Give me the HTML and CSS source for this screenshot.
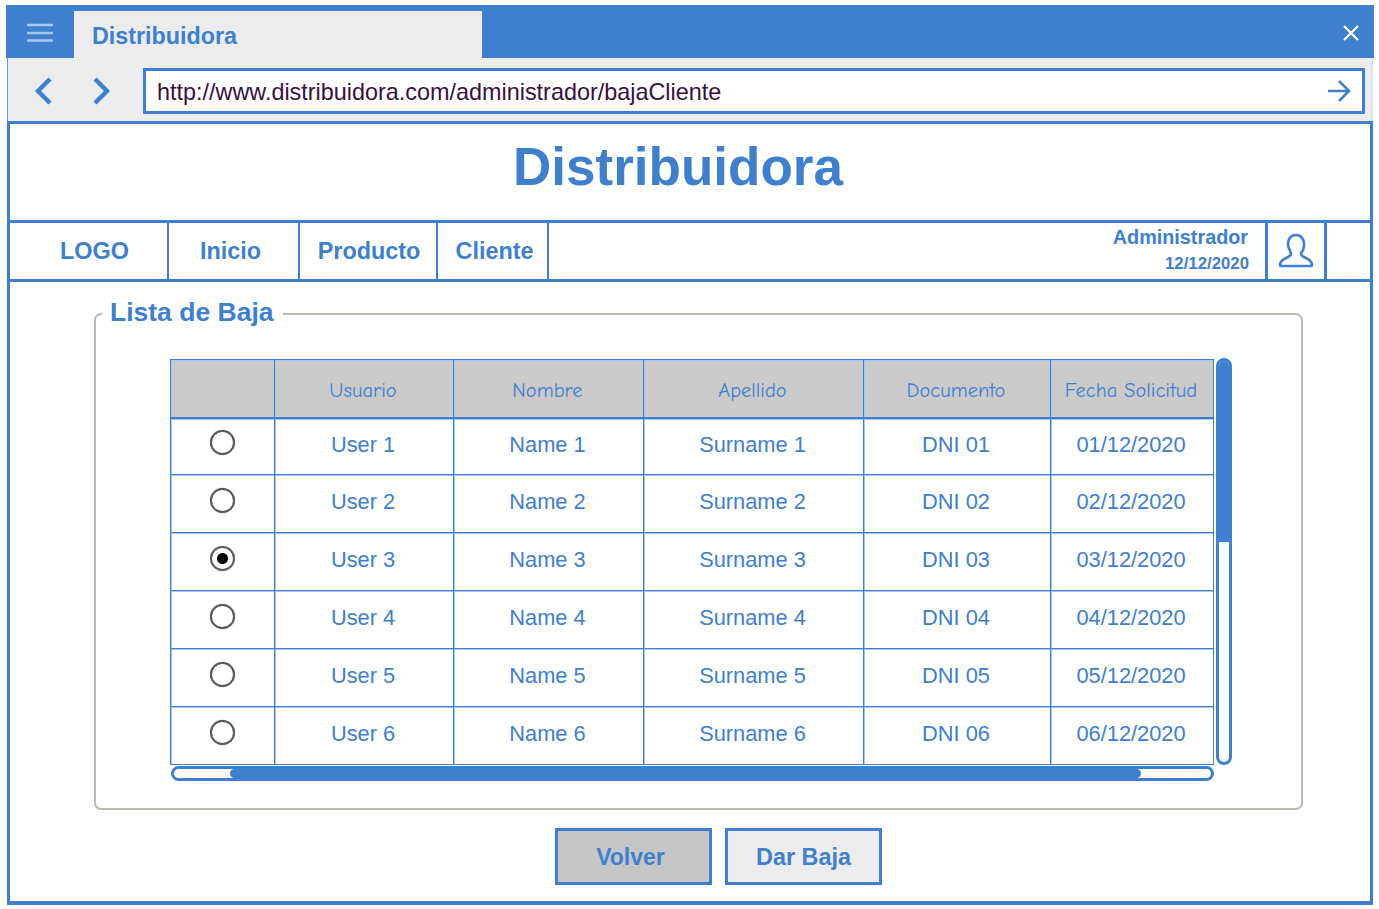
FILE: index.html
```html
<!DOCTYPE html>
<html lang="es">
<head>
    <meta charset="UTF-8">
    <meta name="viewport" content="width=device-width, initial-scale=1.0">
    <title>Distribuidora</title>
    <link rel="stylesheet" href="styles.css">
</head>
<body>
    <div class="window">
        <div class="titlebar">
            <div class="menu-button">
                <svg width="28" height="20" viewBox="0 0 28 20"><path d="M1 2H27M1 10H27M1 17.5H27" stroke="#a9c7ec" stroke-width="2.4" fill="none"/></svg>
            </div>
            <div class="tab">Distribuidora</div>
            <svg class="close-icon" width="18" height="18" viewBox="0 0 18 18"><path d="M2 2L16 16M16 2L2 16" stroke="#fff" stroke-width="2.2" fill="none"/></svg>
        </div>

        <div class="toolbar">
            <svg class="nav-arrow" width="20" height="30" viewBox="0 0 20 30"><path d="M16 3L4 15L16 27" stroke="#3e80cd" stroke-width="4.4" fill="none"/></svg>
            <svg class="nav-arrow" width="20" height="30" viewBox="0 0 20 30"><path d="M4 3L16 15L4 27" stroke="#3e80cd" stroke-width="4.4" fill="none"/></svg>
            <div class="address">
                <span class="address-text">http://www.distribuidora.com/administrador/bajaCliente</span>
                <svg width="24" height="24" viewBox="0 0 24 24"><path d="M1 12H22M12 2L22 12L12 22" stroke="#3e80cd" stroke-width="2.6" fill="none"/></svg>
            </div>
        </div>

        <div class="page">
            <h1 class="site-title">Distribuidora</h1>

            <div class="nav">
                <div class="nav-item nav-logo">LOGO</div>
                <div class="nav-item nav-inicio">Inicio</div>
                <div class="nav-item nav-producto">Producto</div>
                <div class="nav-item nav-cliente">Cliente</div>
                <div class="user-info">
                    <div class="user-name">Administrador</div>
                    <div class="user-date">12/12/2020</div>
                </div>
                <div class="user-icon">
                    <svg width="36" height="36" viewBox="0 0 36 36"><path d="M18 2C13 2 10 6 10 11C10 15 12 18 13 20C13 23 11 24 8 25C4 27 2 29 2 32C2 33 3 33 4 33L32 33C33 33 34 33 34 32C34 29 32 27 28 25C25 24 23 23 23 20C25 18 26 15 26 11C26 6 23 2 18 2Z" stroke="#3e80cd" stroke-width="2.6" fill="none"/></svg>
                </div>
            </div>

            <div class="content">
                <fieldset class="list-box">
                    <legend>Lista de Baja</legend>
                    <div class="table-row">
                        <table class="list-table">
                            <thead>
                                <tr>
                                    <th class="col-radio"></th>
                                    <th class="col-user">Usuario</th>
                                    <th class="col-name">Nombre</th>
                                    <th class="col-surname">Apellido</th>
                                    <th class="col-doc">Documento</th>
                                    <th class="col-date">Fecha Solicitud</th>
                                </tr>
                            </thead>
                            <tbody>
                                <tr><td class="cell-radio"><input type="radio" name="cliente"></td><td>User 1</td><td>Name 1</td><td>Surname 1</td><td>DNI 01</td><td>01/12/2020</td></tr>
                                <tr><td class="cell-radio"><input type="radio" name="cliente"></td><td>User 2</td><td>Name 2</td><td>Surname 2</td><td>DNI 02</td><td>02/12/2020</td></tr>
                                <tr><td class="cell-radio"><input type="radio" name="cliente" checked></td><td>User 3</td><td>Name 3</td><td>Surname 3</td><td>DNI 03</td><td>03/12/2020</td></tr>
                                <tr><td class="cell-radio"><input type="radio" name="cliente"></td><td>User 4</td><td>Name 4</td><td>Surname 4</td><td>DNI 04</td><td>04/12/2020</td></tr>
                                <tr><td class="cell-radio"><input type="radio" name="cliente"></td><td>User 5</td><td>Name 5</td><td>Surname 5</td><td>DNI 05</td><td>05/12/2020</td></tr>
                                <tr><td class="cell-radio"><input type="radio" name="cliente"></td><td>User 6</td><td>Name 6</td><td>Surname 6</td><td>DNI 06</td><td>06/12/2020</td></tr>
                            </tbody>
                        </table>
                        <div class="scroll-v"><div class="scroll-v-thumb"></div></div>
                    </div>
                    <div class="scroll-h"><div class="scroll-h-thumb"></div></div>
                </fieldset>

                <div class="actions">
                    <button class="btn btn-back">Volver</button>
                    <button class="btn">Dar Baja</button>
                </div>
            </div>
        </div>
    </div>
</body>
</html>
```

FILE: styles.css
```css
* {
    box-sizing: border-box;
}
body {
    margin: 5px 0 0 6px;
    font-family: "Liberation Sans", Arial, sans-serif;
    color: #3e80cd;
    background-color: #fff;
}
.window {
    width: 1368px;
}
.titlebar {
    display: flex;
    align-items: flex-end;
    height: 53px;
    background-color: #3e80cd;
    position: relative;
}
.menu-button {
    display: flex;
    align-items: center;
    justify-content: center;
    width: 68px;
    height: 53px;
    padding-top: 2px;
}
.tab {
    width: 408px;
    height: 47px;
    padding: 0 18px;
    line-height: 50px;
    font-size: 23.3px;
    font-weight: bold;
    background-color: #ececec;
}
.close-icon {
    position: absolute;
    right: 14px;
    top: 19px;
}
.toolbar {
    display: flex;
    align-items: center;
    height: 63px;
    margin: 0 1px;
    padding: 3px 6px 0 26px;
    background-color: #ececec;
    border-left: 1px solid #6b9cdb;
    border-right: 2px solid #d5e3f4;
}
.nav-arrow {
    margin-right: 37px;
}
.nav-arrow + .nav-arrow {
    margin-right: 32px;
}
.address {
    flex: 1;
    display: flex;
    align-items: center;
    justify-content: space-between;
    height: 46px;
    padding: 0 11px 0 11px;
    font-size: 23.4px;
    color: #3a0f3f;
    background-color: #fff;
    border: 3px solid #3e80cd;
}
.address-text {
    padding-top: 2px;
}
.page {
    margin: 0 1px;
    width: 1366px;
    height: 784px;
    border: 3px solid #3e80cd;
    border-bottom-width: 4px;
}
.site-title {
    margin: 0;
    height: 96px;
    padding-right: 24px;
    line-height: 86px;
    text-align: center;
    font-size: 53px;
}
.nav {
    display: flex;
    height: 62px;
    border-top: 3px solid #3e80cd;
    border-bottom: 3px solid #3e80cd;
    font-weight: bold;
}
.nav-item {
    display: flex;
    align-items: center;
    justify-content: center;
    font-size: 23.4px;
    border-right: 2px solid #3e80cd;
}
.nav-logo {
    width: 159px;
    padding-left: 12px;
}
.nav-inicio {
    width: 131px;
    padding-right: 6px;
}
.nav-producto {
    width: 138px;
    padding-left: 2px;
}
.nav-cliente {
    width: 111px;
    padding-left: 4px;
}
.user-info {
    flex: 1;
    padding: 2px 17px 0 0;
    text-align: right;
}
.user-name {
    font-size: 19.8px;
    line-height: 24px;
}
.user-date {
    margin-top: 5px;
    margin-right: -1px;
    font-size: 16.8px;
    line-height: 20px;
}
.user-icon {
    display: flex;
    align-items: center;
    justify-content: center;
    width: 62px;
    margin-right: 43px;
    border-left: 3px solid #3e80cd;
    border-right: 3px solid #3e80cd;
}
.content {
    padding-top: 16px;
}
.list-box {
    width: 1209px;
    height: 512px;
    margin: 0 0 18px 84px;
    padding: 29px 0 0 74px;
    border: 2px solid #bdb9ae;
    border-radius: 7px;
}
.list-box legend {
    margin-left: -68px;
    padding: 0 10px 4px 8px;
    font-size: 26.5px;
    line-height: 28px;
    font-weight: bold;
}
.table-row {
    display: flex;
    gap: 2px;
}
.list-table {
    width: 1043px;
    table-layout: fixed;
    border-collapse: collapse;
}
.list-table th, .list-table td {
    padding: 0 2px 3px 0;
    height: 58px;
    text-align: center;
    border: 1px solid #3e80cd;
    box-shadow: inset 1px 1px 0 #a9c7ec;
}
.list-table th {
    padding: 5px 2px 0 0;
    font-family: "Comic Sans MS", "Comic Neue", cursive;
    font-size: 20.5px;
    font-weight: normal;
    background-color: #cacaca;
    border-bottom-width: 2px;
}
.list-table td {
    font-size: 21.8px;
}
.list-table tbody tr:first-child td {
    height: 57px;
}
.list-table .cell-radio {
    padding-right: 0;
}
.col-radio {
    width: 104px;
}
.col-user {
    width: 179px;
}
.col-name {
    width: 190px;
}
.col-surname {
    width: 220px;
}
.col-doc {
    width: 187px;
}
.col-date {
    width: 163px;
}
.list-table input {
    appearance: none;
    display: block;
    width: 25px;
    height: 25px;
    margin: -4px auto 0 auto;
    border: 2px solid #5a5a5a;
    border-radius: 50%;
    background-color: #fff;
    box-shadow: 0 0 1px #777;
}
.list-table input:checked {
    background: radial-gradient(circle, #000 0, #000 5px, #fff 6px);
}
.scroll-v {
    width: 16px;
    height: 407px;
    margin-top: -1px;
    border: 3px solid #3e80cd;
    border-radius: 8px;
    overflow: hidden;
}
.scroll-v-thumb {
    height: 181px;
    background-color: #3e80cd;
}
.scroll-h {
    width: 1043px;
    height: 15px;
    margin: 1px 0 0 1px;
    border: 3px solid #3e80cd;
    border-radius: 8px;
    overflow: hidden;
}
.scroll-h-thumb {
    width: 911px;
    height: 9px;
    margin-left: 56px;
    border-radius: 5px;
    background-color: #3e80cd;
}
.actions {
    display: flex;
    justify-content: center;
    gap: 13px;
    margin-left: 57px;
}
.btn {
    width: 157px;
    height: 57px;
    padding: 1px 0 0 0;
    font-family: "Liberation Sans", Arial, sans-serif;
    font-size: 23.4px;
    font-weight: bold;
    color: #3e80cd;
    background-color: #ececec;
    border: 3px solid #3e80cd;
}
.btn-back {
    padding-right: 6px;
    font-size: 23px;
    background-color: #c6c6c6;
}
```
